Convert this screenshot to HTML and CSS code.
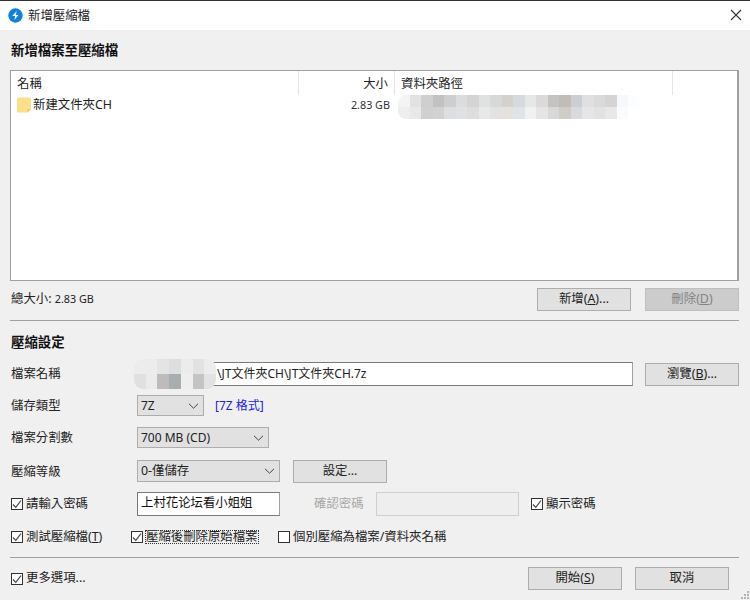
FILE: index.html
```html
<!DOCTYPE html>
<html lang="zh-Hant">
<head>
    <meta charset="UTF-8">
    <title>新增壓縮檔</title>
    <link rel="stylesheet" href="styles.css">
</head>
<body>
    <div class="titlebar">
        <svg class="logo" width="15" height="15" viewBox="0 0 15 15"><circle cx="7.5" cy="7.5" r="7.2" fill="#0f80dc"/><path d="M8.600 3 4.400 8h2.700l-.7 4 4.200-5H7.900z" fill="#fff"/></svg>
        <span class="title">新增壓縮檔</span>
        <svg class="close" width="12" height="12" viewBox="0 0 12 12"><path d="M1 1l10 10M11 1 1 11" stroke="#333" stroke-width="1.100" fill="none"/></svg>
    </div>

    <div class="main">
        <div class="heading first">新增檔案至壓縮檔</div>

        <div class="list">
            <div class="list-head">
                <div class="col col-name">名稱</div>
                <div class="col col-size">大小</div>
                <div class="col col-path">資料夾路徑</div>
                <div class="col col-rest"></div>
            </div>
            <div class="list-row">
                <div class="col-name row-name">
                    <svg width="14" height="16" viewBox="0 0 14 16"><path d="M0 1.500 1 .5h12l1 1V12l-3.500 3.500H1l-1-1z" fill="#fbdf8b"/><path d="M10.500 15.500V12H14z" fill="#eec35c"/></svg>
                    <span>新建文件夾CH</span>
                </div>
                <div class="col-size row-size">2.83 GB</div>
                <svg class="mosaic-path" width="242" height="24" viewBox="0 0 21 2" preserveAspectRatio="none" shape-rendering="crispEdges">
                    <rect x="0" y="0" width="1" height="1" fill="#f4f4f5"/><rect x="1" y="0" width="1" height="1" fill="#e2e2e2"/><rect x="2" y="0" width="1" height="1" fill="#cfcfcf"/><rect x="3" y="0" width="1" height="1" fill="#c2c2c2"/><rect x="4" y="0" width="1" height="1" fill="#ccced0"/><rect x="5" y="0" width="1" height="1" fill="#dcdcdc"/><rect x="6" y="0" width="1" height="1" fill="#d5d4d4"/><rect x="7" y="0" width="1" height="1" fill="#e0e1e3"/><rect x="8" y="0" width="1" height="1" fill="#d8d8d8"/><rect x="9" y="0" width="1" height="1" fill="#d4d1cc"/><rect x="10" y="0" width="1" height="1" fill="#d4dadf"/><rect x="11" y="0" width="1" height="1" fill="#e6e7e8"/><rect x="12" y="0" width="1" height="1" fill="#dbd9d9"/><rect x="13" y="0" width="1" height="1" fill="#c4c3c1"/><rect x="14" y="0" width="1" height="1" fill="#c0bdb9"/><rect x="15" y="0" width="1" height="1" fill="#cbced2"/><rect x="16" y="0" width="1" height="1" fill="#e0e0e2"/><rect x="17" y="0" width="1" height="1" fill="#dadadb"/><rect x="18" y="0" width="1" height="1" fill="#d5d3d3"/><rect x="19" y="0" width="1" height="1" fill="#f6f8fb"/><rect x="20" y="0" width="1" height="1" fill="#fcfdfe"/>
                    <rect x="0" y="1" width="1" height="1" fill="#eeeeee"/><rect x="1" y="1" width="1" height="1" fill="#e8e8e8"/><rect x="2" y="1" width="1" height="1" fill="#d0d0d0"/><rect x="3" y="1" width="1" height="1" fill="#d2d2d2"/><rect x="4" y="1" width="1" height="1" fill="#dcdee2"/><rect x="5" y="1" width="1" height="1" fill="#e0e1e2"/><rect x="6" y="1" width="1" height="1" fill="#dcdede"/><rect x="7" y="1" width="1" height="1" fill="#e8e8e8"/><rect x="8" y="1" width="1" height="1" fill="#e2e2e2"/><rect x="9" y="1" width="1" height="1" fill="#e5e2de"/><rect x="10" y="1" width="1" height="1" fill="#e0e4e8"/><rect x="11" y="1" width="1" height="1" fill="#f0f1f1"/><rect x="12" y="1" width="1" height="1" fill="#e5e5e5"/><rect x="13" y="1" width="1" height="1" fill="#d8d8d8"/><rect x="14" y="1" width="1" height="1" fill="#d0cdc9"/><rect x="15" y="1" width="1" height="1" fill="#d8dadb"/><rect x="16" y="1" width="1" height="1" fill="#e6e6e8"/><rect x="17" y="1" width="1" height="1" fill="#e0e2e4"/><rect x="18" y="1" width="1" height="1" fill="#e8e8e8"/><rect x="19" y="1" width="1" height="1" fill="#fafbfd"/><rect x="20" y="1" width="1" height="1" fill="#feffff"/>
                </svg>
            </div>
        </div>

        <div class="total-row">
            <span>總大小: <span class="size-value">2.83 GB</span></span>
            <div class="button-group wide-gap">
                <div class="button">新增(<u>A</u>)...</div>
                <div class="button disabled">刪除(<u>D</u>)</div>
            </div>
        </div>

        <div class="rule rule-top"></div>

        <div class="heading second">壓縮設定</div>

        <div class="form-row row-file">
            <div class="label">檔案名稱</div>
            <div class="input file-input">\JT文件夾CH\JT文件夾CH.7z</div>
            <div class="button browse">瀏覽(<u>B</u>)...</div>
            <svg class="mosaic-file" width="82" height="30" viewBox="0 0 7 2" preserveAspectRatio="none" shape-rendering="crispEdges">
                <rect x="0" y="0" width="7" height="1" fill="#ececec"/>
                <rect x="2" y="0" width="1" height="1" fill="#e4e4e4"/><rect x="3" y="0" width="1" height="1" fill="#dedede"/><rect x="5" y="0" width="1" height="1" fill="#e2e2e2"/>
                <rect x="0" y="1" width="1" height="1" fill="#e0e0e0"/><rect x="1" y="1" width="1" height="1" fill="#ebebeb"/><rect x="2" y="1" width="1" height="1" fill="#bdbbbb"/><rect x="3" y="1" width="1" height="1" fill="#a8adb0"/><rect x="4" y="1" width="1" height="1" fill="#eeeeee"/><rect x="5" y="1" width="1" height="1" fill="#c4c4c4"/><rect x="6" y="1" width="1" height="1" fill="#e2e2e2"/>
            </svg>
        </div>

        <div class="form-row row-type">
            <div class="label">儲存類型</div>
            <div class="select select-type"><span>7Z</span><svg width="11" height="6" viewBox="0 0 11 6"><path d="M1 .8l4.500 4.400L10 .8" stroke="#444" fill="none"/></svg></div>
            <span class="format-link">[7Z 格式]</span>
        </div>

        <div class="form-row row-split">
            <div class="label">檔案分割數</div>
            <div class="select select-split"><span>700 MB (CD)</span><svg width="11" height="6" viewBox="0 0 11 6"><path d="M1 .8l4.500 4.400L10 .8" stroke="#444" fill="none"/></svg></div>
        </div>

        <div class="form-row row-level">
            <div class="label">壓縮等級</div>
            <div class="select select-level"><span>0-僅儲存</span><svg width="11" height="6" viewBox="0 0 11 6"><path d="M1 .8l4.500 4.400L10 .8" stroke="#444" fill="none"/></svg></div>
            <div class="button settings">設定...</div>
        </div>

        <div class="form-row row-password">
            <div class="check check-password">
                <span class="box"><svg width="10" height="10" viewBox="0 0 10 10"><path d="M1 5.500 3.800 8.300 9 1.500" stroke="#444" stroke-width="1.200" fill="none"/></svg></span>
                <span>請輸入密碼</span>
            </div>
            <div class="input password-input">上村花论坛看小姐姐</div>
            <div class="confirm-label">確認密碼</div>
            <div class="input confirm-input"></div>
            <div class="check show-password">
                <span class="box"><svg width="10" height="10" viewBox="0 0 10 10"><path d="M1 5.500 3.800 8.300 9 1.500" stroke="#444" stroke-width="1.200" fill="none"/></svg></span>
                <span>顯示密碼</span>
            </div>
        </div>

        <div class="form-row row-options">
            <div class="check opt-test">
                <span class="box"><svg width="10" height="10" viewBox="0 0 10 10"><path d="M1 5.500 3.800 8.300 9 1.500" stroke="#444" stroke-width="1.200" fill="none"/></svg></span>
                <span>測試壓縮檔(<u>T</u>)</span>
            </div>
            <div class="check opt-delete">
                <span class="box"><svg width="10" height="10" viewBox="0 0 10 10"><path d="M1 5.500 3.800 8.300 9 1.500" stroke="#444" stroke-width="1.200" fill="none"/></svg></span>
                <span class="focused">壓縮後刪除原始檔案</span>
            </div>
            <div class="check">
                <span class="box"></span>
                <span>個別壓縮為檔案/資料夾名稱</span>
            </div>
        </div>

        <div class="rule rule-bottom"></div>

        <div class="footer">
            <div class="check">
                <span class="box"><svg width="10" height="10" viewBox="0 0 10 10"><path d="M1 5.500 3.800 8.300 9 1.500" stroke="#444" stroke-width="1.200" fill="none"/></svg></span>
                <span>更多選項...</span>
            </div>
            <div class="button-group narrow-gap">
                <div class="button">開始(<u>S</u>)</div>
                <div class="button">取消</div>
            </div>
        </div>
    </div>

    <svg class="grip" width="10" height="10" viewBox="0 0 10 10" fill="#b4b4b4"><rect x="7" y="1" width="2" height="2"/><rect x="4" y="4" width="2" height="2"/><rect x="7" y="4" width="2" height="2"/><rect x="1" y="7" width="2" height="2"/><rect x="4" y="7" width="2" height="2"/><rect x="7" y="7" width="2" height="2"/></svg>
</body>
</html>
```

FILE: styles.css
```css
* {
    box-sizing: border-box;
}
html, body {
    height: 100%;
}
body {
    margin: 0;
    position: relative;
    overflow: hidden;
    background-color: #f0f0f0;
    color: #222;
    font-family: "Noto Sans", "Noto Sans CJK TC", sans-serif;
    font-size: 12.4px;
    line-height: 1;
}
.titlebar {
    height: 30px;
    display: flex;
    align-items: center;
    background-color: #fff;
    border-top: 1px solid #333;
    padding: 0 8px 0 8px;
}
.title {
    margin-left: 5px;
    padding-top: 1px;
    flex: 1;
}
.close {
    margin-top: -2px;
}
.main {
    padding: 0 11px 0 10px;
}
.heading {
    height: 20px;
    display: flex;
    align-items: center;
    font-size: 13.4px;
    font-weight: bold;
    padding: 2px 0 0 1px;
    color: #111;
}
.heading.first {
    margin-top: 10px;
}
.heading.second {
    margin-top: 11px;
}

/* file list */
.list {
    height: 211px;
    margin-top: 10px;
    background-color: #fff;
    border: 1px solid #a0a0a0;
    border-right-width: 2px;
}
.list-head {
    height: 24px;
    display: flex;
}
.col {
    display: flex;
    align-items: center;
    border-right: 1px solid #e5e5e5;
    padding: 2px 6px 0;
}
.col-name {
    width: 288px;
}
.col-size {
    width: 96px;
    justify-content: flex-end;
}
.col-path {
    width: 278px;
}
.col-rest {
    border-right: none;
}
.list-row {
    height: 24px;
    display: flex;
    align-items: flex-start;
}
.row-name {
    height: 20px;
    display: flex;
    align-items: center;
    gap: 2px;
    padding-left: 6px;
}
.row-size {
    height: 20px;
    display: flex;
    align-items: center;
    justify-content: flex-end;
    padding-right: 5px;
    font-size: 10.8px;
    color: #333;
}
.mosaic-path {
    margin-left: 3px;
    border-radius: 8px;
    filter: blur(0.6px);
}

.total-row {
    height: 23px;
    margin-top: 7px;
    display: flex;
    align-items: center;
    justify-content: space-between;
    padding-left: 1px;
}
.size-value {
    font-size: 10.8px;
}
.button-group {
    display: flex;
}
.wide-gap {
    gap: 14px;
}
.narrow-gap {
    gap: 13px;
}
.button {
    width: 94px;
    height: 23px;
    display: flex;
    align-items: center;
    justify-content: center;
    background-color: #e1e1e1;
    border: 1px solid #adadad;
}
.button.disabled {
    background-color: #cccccc;
    border-color: #bfbfbf;
    color: #838383;
}
.rule {
    height: 1px;
    background-color: #a0a0a0;
}
.rule-top {
    margin-top: 9px;
}
.rule-bottom {
    margin-top: 9px;
}

/* form rows */
.form-row {
    display: flex;
    align-items: center;
    position: relative;
}
.label {
    width: 127px;
    padding: 2px 0 0 1px;
}
.input {
    height: 24px;
    display: flex;
    align-items: center;
    background-color: #fff;
    border: 1px solid #7a7a7a;
    border-right-color: #a0a0a0;
    padding-left: 5px;
}
.select {
    height: 21px;
    display: flex;
    align-items: center;
    justify-content: space-between;
    background-color: #e1e1e1;
    border: 1px solid #adadad;
    padding: 0 4px 0 3px;
    font-size: 12px;
}
.row-file {
    height: 24px;
    margin-top: 10px;
}
.row-file .label {
    padding-top: 0;
}
.file-input {
    width: 496px;
    padding-left: 79px;
    font-size: 12px;
}
.browse {
    margin-left: 12px;
}
.mosaic-file {
    position: absolute;
    left: 124px;
    top: -3px;
    filter: blur(0.6px);
    border-radius: 9px;
}
.row-type {
    height: 21px;
    margin-top: 9px;
}
.select-type {
    width: 67px;
}
.format-link {
    margin-left: 11px;
    color: #2222e0;
    font-size: 12px;
}
.row-split {
    height: 21px;
    margin-top: 11px;
}
.select-split {
    width: 132px;
}
.row-level {
    height: 23px;
    margin-top: 12px;
}
.select-level {
    width: 143px;
    height: 22px;
    align-self: flex-start;
    font-size: 12.4px;
}
.settings {
    margin-left: 13px;
}
.row-password {
    height: 24px;
    margin-top: 9px;
}
.check {
    display: flex;
    align-items: center;
    gap: 3px;
}
.check-password {
    width: 127px;
    padding-left: 1px;
}
.box {
    width: 12px;
    height: 12px;
    flex-shrink: 0;
    display: flex;
    align-items: center;
    justify-content: center;
    background-color: #fff;
    border: 1px solid #333;
}
.password-input {
    width: 143px;
    padding: 0 0 2px 3px;
    color: #111;
}
.confirm-label {
    width: 96px;
    padding-left: 34px;
    color: #a8a8a8;
}
.confirm-input {
    width: 143px;
    background-color: #eeeeee;
    border-color: #cfcfcf;
}
.show-password {
    margin-left: 12px;
}
.row-options {
    height: 22px;
    margin-top: 10px;
    padding-left: 1px;
}
.opt-test {
    width: 120px;
}
.opt-delete {
    width: 147px;
}
.focused {
    outline: 1px dotted #333;
}
.footer {
    height: 23px;
    margin-top: 9px;
    margin-right: 10px;
    padding-left: 1px;
    display: flex;
    align-items: center;
    justify-content: space-between;
}
.grip {
    position: absolute;
    right: 0;
    bottom: 0;
}
```
